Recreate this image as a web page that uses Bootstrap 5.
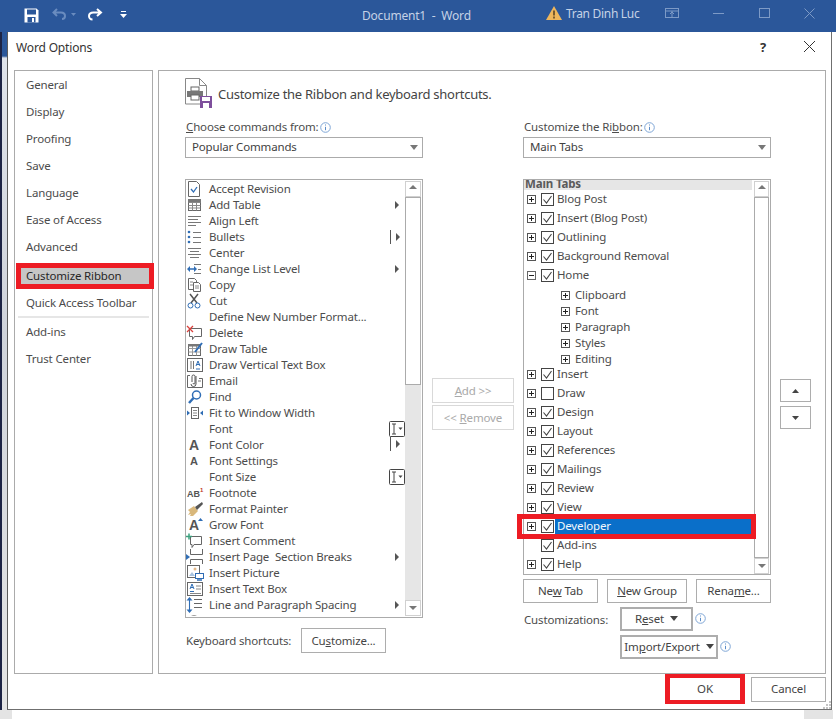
<!DOCTYPE html>
<html lang="en">
<head>
<meta charset="utf-8">
<title>Word Options</title>
<link href="https://cdn.jsdelivr.net/npm/bootstrap@5.3.0/dist/css/bootstrap.min.css" rel="stylesheet">
<style>
html,body{margin:0;height:719px;overflow:hidden;background:#fff}
body{font-family:"Noto Sans","Open Sans",sans-serif;font-size:11.5px;letter-spacing:-.15px;line-height:16px;color:#4c4c4c}
svg{display:block;flex:none}
.app{width:836px;height:719px}
.ttl{height:32px;background:#2b579a;color:#c5d2e6;font-size:12px;position:relative}
.ttl-it{position:absolute;top:7px}
.ttl-tx{position:absolute;top:6px;line-height:18px;white-space:pre}
.ttl-doc{letter-spacing:-.2px;top:7px}
.ttl-usr{letter-spacing:-.3px;top:5px}
.mid{height:678px}
.strip-l{width:7px;background:linear-gradient(#2b579a 0,#2b579a 24px,#dfe3ea 26px,#cfd3da 300px,#e4e4e4 100%);border-left:2px solid #1c2344}
.strip-r{width:4px;background:#fff}
.dlg{width:825px;height:678px;background:#fff;border:1px solid #6f6f6f;border-top:0;border-left:1px solid #5b5b5b;position:relative}
.dlg-h{height:38px;padding:0 0 7px 8px;color:#333;font-size:12px}
.dlg-ctl{position:absolute;top:7px}
.dlg-b{padding-left:6px;height:604px;gap:5px}
.wnav{width:139px;border:1px solid #ababab}
.wnav-i{height:27px;padding-left:11px;line-height:27px;white-space:nowrap}
.wnav-on{height:26px;line-height:16px;margin-top:3px;width:138px;border:5px solid #ed1c24;background:#c6c6c6;padding-left:5px;color:#262626;margin-left:1px}
.wnav-sep{height:2px;background:#e6e6e6;margin:0 3px}
.wmain{width:668px;border:1px solid #ababab;padding-left:26px}
.whead{height:48px;padding-top:8px;gap:5px;font-size:13px;letter-spacing:-.27px;line-height:30px;color:#444}
.whead svg{margin-top:-1px}
.cols{gap:9px}
.col-l{width:238px}
.col-c{width:82px;padding-top:259px}
.col-r{width:248px}
.col-x{width:31px;padding-top:260px}
.lbl{height:18px;white-space:nowrap;padding:0 0 2px 1px;line-height:16px;gap:1px}
.wsel{height:21px;border:1px solid #ababab;padding-left:6px;line-height:17px;margin-bottom:21px;position:relative;color:#3f3f3f}
.wsel::after{content:"";position:absolute;right:4px;top:7px;border:4px solid transparent;border-top:5px solid #777;border-bottom:0}
.wlist{height:439px;border:1px solid #ababab;padding:1px 0}
.wtree{height:396px;border:1px solid #ababab}
.lrows{width:220px;overflow:hidden}
.lrow{height:16px;line-height:16px;white-space:pre;position:relative}
.lico{width:23px;padding-left:0}
.lwid{position:absolute;left:203px;top:0;height:16px;width:16px}
.lwid-ar{left:208px;top:4px;width:6px;height:8px}
.lwid-bar{left:204px;width:12px}
.sb{width:17px;padding-right:1px}
.sb-t{height:394px;margin-top:1px}
.sb-b{height:16px;background:#fff;border:1px solid #d0d0d0;flex:none;position:relative}
.sb-b::after{content:"";position:absolute;left:3px;border:4px solid transparent}
.sb-u::after{top:3px;border-bottom:4px solid #777;border-top:0}
.sb-d::after{top:5px;border-top:4px solid #777;border-bottom:0}
.sb-th{background:#fff;border:1px solid #ababab;flex:none}
.sb-th-l{height:188px}
.sb-th-r{height:361px}
.sb-tr{background:#e6e6e6;flex-grow:1}
.btn.wbtn{--bs-btn-border-radius:0;font-size:11.5px;letter-spacing:-.15px;line-height:16px;padding:0;background:#fff;border:1px solid #adadad;color:#444;white-space:nowrap}
.btn.wbtn:disabled{opacity:1;color:#a9a9a9;border-color:#d9d9d9}
.btn.wfat{border:2px solid #adadad;height:24px}
.wcaret{display:inline-block;vertical-align:2px;margin-left:6px;border:4px solid transparent;border-top:5px solid #444;border-bottom:0}
.btn-addr{width:82px;height:25px;margin-bottom:2px;display:block}
.btn-ud{width:31px;height:23px;margin-bottom:4px}
.kbd-row{height:35px;padding:10px 0 0 1px}
.kbd-l{width:115px}
.btn-cust{width:85px;height:25px}
.tree-top{height:10px;width:228px;background:#e6e6e6;font-weight:700;color:#5a5a5a;line-height:8px;padding-left:1px;overflow:hidden;flex:none}
.trows{width:230px}
.trow{height:19px;padding-left:3px;position:relative;line-height:18px;white-space:nowrap;width:230px}
.tsub{height:16px;padding-left:37px;line-height:16px;white-space:nowrap;gap:5px}
.tsubs{margin:2px 0 -2px}
.tgap{gap:5px}
.ttx{padding:0 0 2px 2px;margin-left:-4px}
.tsel .ttx{background:#0a6fc9;color:#f2f7fc;flex-grow:1;height:19px;line-height:17px;padding-bottom:0}
.tsp{width:9px;flex:none}
.redbox{position:absolute;left:-7px;top:-3px;width:239px;height:25px;border:5px solid #ed1c24}
.act-row{height:28px;padding-top:4px;gap:9px}
.act-row .btn{height:24px}
.btn-w75{width:75px}
.btn-w80{width:80px}
.cz-first{margin-top:4px}
.cz-second{margin-top:4px;padding-left:97px}
.cz-l{width:97px;padding:5px 0 0 1px}
.btn-reset{width:73px}
.btn-imp{width:98px}
.cz-inf{margin:6px 0 0 2px}
.foot-d{height:35px;padding:0 5px 5px 0;gap:6px;position:relative}
.ok-b{width:80px;height:30px;border:4px solid #ed1c24!important;border-left-width:5px!important;border-right-width:5px!important}
.cancel-b{width:75px;height:25px}
.grip{position:absolute;right:0;bottom:0}
.bot{height:9px}
.bot-a{width:12px;background:#e4e4e4}
.bot-c{width:29px;background:#e4e4e4;margin-right:3px}
.gl-a{font-family:"Liberation Sans",sans-serif;font-weight:700;fill:#555;letter-spacing:0}
.ic-save{left:24px;top:8px}.ic-undo{left:52px;top:8px}.ic-redo{left:87px;top:8px}.ic-more{left:120px;top:11px}
.ic-warn{left:546px;top:6px}.ic-rib{left:665px;top:8px}.ic-min{left:713px;top:13px}.ic-max{left:759px;top:8px}.ic-cls{left:804px;top:8px}
.tx-doc{left:362px}.tx-usr{left:566px}
.ctl-q{left:752px;font-weight:700;color:#333;font-size:13px}
.ctl-x{left:795px;top:8px}
</style>
</head>
<body>
<svg width="0" height="0" class="position-absolute">
<defs>
<symbol id="pl" viewBox="0 0 9 9"><rect x=".5" y=".5" width="8" height="8" fill="#fff" stroke="#555"/><path d="M2 4.5h5M4.500 2v5" stroke="#222"/></symbol>
<symbol id="mi" viewBox="0 0 9 9"><rect x=".5" y=".5" width="8" height="8" fill="#fff" stroke="#666"/><path d="M2 4.500h5" stroke="#222"/></symbol>
<symbol id="ck" viewBox="0 0 13 13"><rect x=".5" y=".5" width="12" height="12" fill="#fff" stroke="#444"/><path d="M2.500 6.500l3 3.500 5-7" fill="none" stroke="#444" stroke-width="1.100"/></symbol>
<symbol id="uc" viewBox="0 0 13 13"><rect x=".5" y=".5" width="12" height="12" fill="#fff" stroke="#444"/></symbol>
<symbol id="ra" viewBox="0 0 6 8"><path d="M1 0l4 4-4 4z" fill="#555"/></symbol>
<symbol id="inf" viewBox="0 0 11 11"><circle cx="5.500" cy="5.500" r="4.800" fill="#fff" stroke="#7fa6d6"/><path d="M5.500 2.500v1M5.500 4.800v3.400" stroke="#5b8cc8"/></symbol>
<symbol id="ibeam" viewBox="0 0 16 16"><rect x=".5" y=".5" width="15" height="15" rx="1" fill="#fff" stroke="#444"/><path d="M3 3h4M3 13h4M5 3v10" stroke="#444"/><path d="M9.500 6.500h4l-2 2.500z" fill="#444"/></symbol>
</defs>
</svg>
<div class="app d-flex flex-column">
  <div class="ttl flex-none">
    <svg class="ttl-it ic-save" width="15" height="15" viewBox="0 0 15 15"><path d="M.5.5h12l2 2v12H.5z" fill="#fff"/><rect x="3" y="1.500" width="9" height="5" fill="#2b579a"/><rect x="3.500" y="9" width="8" height="5.500" fill="#2b579a"/><rect x="8" y="10" width="2" height="4" fill="#fff"/></svg>
    <svg class="ttl-it ic-undo" width="24" height="14" viewBox="0 0 24 14"><path d="M5 1L1.500 4.500 5 8M2 4.500h7c3 0 4 2 4 3.500s-1 3-3 3" fill="none" stroke="#6a8cbf" stroke-width="2"/><path d="M19 5h5l-2.500 3z" fill="#6a8cbf"/></svg>
    <svg class="ttl-it ic-redo" width="16" height="14" viewBox="0 0 16 14"><path d="M10 1l4 3.500L10 8M13.500 4.500h-7C3 4.500 2 6.500 2 8s1 3.500 3.500 3.500" fill="none" stroke="#fff" stroke-width="2"/></svg>
    <svg class="ttl-it ic-more" width="7" height="8" viewBox="0 0 7 8"><path d="M1 .5h5" stroke="#fff"/><path d="M0 3h7L3.500 7z" fill="#fff"/></svg>
    <span class="ttl-tx ttl-doc tx-doc">Document1  -  Word</span>
    <svg class="ttl-it ic-warn" width="16" height="14" viewBox="0 0 16 14"><path d="M8 0l8 14H0z" fill="#eeb65c"/><path d="M8 4.500v5M8 10.500v2" stroke="#5c4522" stroke-width="1.600"/></svg>
    <span class="ttl-tx ttl-usr tx-usr">Tran Dinh Luc</span>
    <svg class="ttl-it ic-rib" width="14" height="10" viewBox="0 0 14 10"><rect x=".5" y=".5" width="13" height="9" fill="none" stroke="#7d9ac6"/><path d="M.5 3h13M7 3v6M5 6l2-2 2 2" fill="none" stroke="#7d9ac6"/></svg>
    <svg class="ttl-it ic-min" width="11" height="1" viewBox="0 0 11 1"><path d="M0 .5h11" stroke="#7d9ac6"/></svg>
    <svg class="ttl-it ic-max" width="11" height="10" viewBox="0 0 11 10"><rect x=".5" y=".5" width="10" height="9" fill="none" stroke="#7d9ac6"/></svg>
    <svg class="ttl-it ic-cls" width="11" height="11" viewBox="0 0 11 11"><path d="M.5.500l10 10M10.500.500l-10 10" stroke="#7d9ac6"/></svg>
  </div>
  <div class="mid d-flex">
    <div class="strip-l"></div>
    <div class="dlg d-flex flex-column">
      <div class="dlg-h d-flex align-items-center">Word Options</div>
      <span class="dlg-ctl ctl-q">?</span>
      <svg class="dlg-ctl ctl-x" width="13" height="13" viewBox="0 0 13 13"><path d="M1 1l11 11M12 1L1 12" stroke="#333" stroke-width="1"/></svg>
      <div class="dlg-b d-flex">
        <div class="wnav">
          <div class="wnav-i">General</div>
          <div class="wnav-i">Display</div>
          <div class="wnav-i">Proofing</div>
          <div class="wnav-i">Save</div>
          <div class="wnav-i">Language</div>
          <div class="wnav-i">Ease of Access</div>
          <div class="wnav-i">Advanced</div>
          <div class="wnav-i wnav-on">Customize Ribbon</div>
          <div class="wnav-i">Quick Access Toolbar</div>
          <div class="wnav-sep"></div>
          <div class="wnav-i">Add-ins</div>
          <div class="wnav-i">Trust Center</div>
        </div>
        <div class="wmain">
          <div class="whead d-flex">
            <svg width="28" height="31" viewBox="0 0 28 31"><path d="M.5.500h14l7 7V26H.5z" fill="#fff" stroke="#888"/><path d="M14.500.500v7h7" fill="none" stroke="#888"/><rect x="6" y="9" width="8" height="4" fill="#fff" stroke="#666"/><rect x="2" y="13" width="16" height="6" fill="#777"/><rect x="6" y="17" width="8" height="5" fill="#fff" stroke="#666"/><rect x="15" y="18" width="12" height="12" fill="#7e4f9c"/><rect x="17" y="19" width="8" height="4" fill="#fff"/><rect x="18" y="25" width="6" height="5" fill="#fff"/></svg>
            <span>Customize the Ribbon and keyboard shortcuts.</span>
          </div>
          <div class="cols d-flex">
            <div class="col-l">
              <div class="lbl d-flex align-items-center"><span><u>C</u>hoose commands from:</span><svg width="11" height="11"><use href="#inf"/></svg></div>
              <div class="wsel">Popular Commands</div>
              <div class="wlist d-flex">
                <div class="lrows">
                  <div class="lrow d-flex"><span class="lico"><svg width="18" height="16" viewBox="0 0 18 16"><path d="M2.500.5h8l3 3v12h-11z" fill="#fff" stroke="#666"/><path d="M5 8l2.500 3L11 6" fill="none" stroke="#2f6db5" stroke-width="1.300"/></svg></span>Accept Revision</div>
                  <div class="lrow d-flex"><span class="lico"><svg width="18" height="16" viewBox="0 0 18 16"><rect x="2.500" y="2.500" width="12" height="11" fill="#fff" stroke="#666"/><path d="M2.500 5.500h12M2.500 8.500h12M2.500 11h12M6.500 2.500v11M10.500 2.500v11" stroke="#888"/><rect x="2" y="2" width="13" height="3" fill="#777"/></svg></span>Add Table<svg class="lwid lwid-ar"><use href="#ra"/></svg></div>
                  <div class="lrow d-flex"><span class="lico"><svg width="18" height="16" viewBox="0 0 18 16"><path d="M2 3.500h13M2 6.500h10M2 9.500h13M2 12.500h8" stroke="#777"/></svg></span>Align Left</div>
                  <div class="lrow d-flex"><span class="lico"><svg width="18" height="16" viewBox="0 0 18 16"><circle cx="3" cy="3" r="1.300" fill="#2f6db5"/><circle cx="3" cy="8" r="1.300" fill="#2f6db5"/><circle cx="3" cy="13" r="1.300" fill="#2f6db5"/><path d="M7 3.500h8M7 8.500h8M7 13.500h8" stroke="#777"/></svg></span>Bullets<svg class="lwid lwid-bar" viewBox="0 0 12 16"><path d="M.5 1v14" stroke="#555"/><path d="M6 4l4 4-4 4z" fill="#555"/></svg></div>
                  <div class="lrow d-flex"><span class="lico"><svg width="18" height="16" viewBox="0 0 18 16"><path d="M2 3.500h13M4 6.500h9M2 9.500h13M4 12.500h9" stroke="#777"/></svg></span>Center</div>
                  <div class="lrow d-flex"><span class="lico"><svg width="18" height="16" viewBox="0 0 18 16"><path d="M2 8h8" stroke="#2f6db5" stroke-width="1.500"/><path d="M1 8l3-3v6zM11 8L8 5v6z" fill="#2f6db5"/><path d="M8 3.500h7M12 8.500h3M8 12.500h7" stroke="#777"/></svg></span>Change List Level<svg class="lwid lwid-ar"><use href="#ra"/></svg></div>
                  <div class="lrow d-flex"><span class="lico"><svg width="18" height="16" viewBox="0 0 18 16"><path d="M2.500 1.500h6l2 2v9h-8z" fill="#fff" stroke="#666"/><path d="M7.500 5.500h5l2 2v7h-7z" fill="#fff" stroke="#666"/><path d="M4 5h3M4 8h3M9 9h4M9 11h4" stroke="#888"/></svg></span>Copy</div>
                  <div class="lrow d-flex"><span class="lico"><svg width="18" height="16" viewBox="0 0 18 16"><path d="M4 1l7 9M12 1L5 10" stroke="#555" stroke-width="1.500"/><circle cx="4.500" cy="12.500" r="2.500" fill="none" stroke="#2f6db5"/><circle cx="11.500" cy="12.500" r="2.500" fill="none" stroke="#2f6db5"/></svg></span>Cut</div>
                  <div class="lrow d-flex"><span class="lico"></span>Define New Number Format...</div>
                  <div class="lrow d-flex"><span class="lico"><svg width="18" height="16" viewBox="0 0 18 16"><path d="M3.500 3.500h12v8h-7l-2 3v-3h-3z" fill="#fff" stroke="#666"/><path d="M1 1l6 6M7 1L1 7" stroke="#d9413c" stroke-width="1.300"/></svg></span>Delete</div>
                  <div class="lrow d-flex"><span class="lico"><svg width="18" height="16" viewBox="0 0 18 16"><rect x="2.500" y="3.500" width="12" height="11" fill="#fff" stroke="#666"/><path d="M2.500 7.500h12M2.500 11h12M6.500 3.500v11M10.500 3.500v11" stroke="#999"/><rect x="2" y="3" width="13" height="2.500" fill="#777"/><path d="M9 11l7-9" stroke="#2f6db5" stroke-width="2"/></svg></span>Draw Table</div>
                  <div class="lrow d-flex"><span class="lico"><svg width="18" height="16" viewBox="0 0 18 16"><rect x="1.500" y="1.500" width="15" height="13" fill="#fff" stroke="#666"/><path d="M5 4v8M7.500 4v8" stroke="#777"/><path d="M10 9l2-5 2 5M10.500 7.500h3M10 12h4" fill="none" stroke="#2f6db5"/></svg></span>Draw Vertical Text Box</div>
                  <div class="lrow d-flex"><span class="lico"><svg width="18" height="16" viewBox="0 0 18 16"><path d="M4 2.500H1.500v12h15v-9H13" fill="none" stroke="#666"/><path d="M6 9V3.500a1.500 1.500 0 013 0V10a1 1 0 01-2 0" fill="none" stroke="#555"/><path d="M10 3v8a2.500 2.500 0 01-5 0" fill="none" stroke="#555"/><path d="M12 8h3" stroke="#777"/></svg></span>Email</div>
                  <div class="lrow d-flex"><span class="lico"><svg width="18" height="16" viewBox="0 0 18 16"><circle cx="10.500" cy="6" r="4" fill="#fff" stroke="#2f6db5" stroke-width="1.500"/><path d="M7.500 9L3 14" stroke="#2f6db5" stroke-width="2.500"/></svg></span>Find</div>
                  <div class="lrow d-flex"><span class="lico"><svg width="18" height="16" viewBox="0 0 18 16"><rect x="5.500" y="2.500" width="7" height="11" fill="#fff" stroke="#666"/><path d="M7 5.500h4M7 8h4M7 10.500h4" stroke="#888"/><path d="M4 8L1 5.500v5zM14 8l3-2.500v5z" fill="#2f6db5"/></svg></span>Fit to Window Width</div>
                  <div class="lrow d-flex"><span class="lico"></span>Font<svg class="lwid"><use href="#ibeam"/></svg></div>
                  <div class="lrow d-flex"><span class="lico"><svg width="18" height="16" viewBox="0 0 18 16"><text x="8" y="13" text-anchor="middle" class="gl-a" font-size="14">A</text></svg></span>Font Color<svg class="lwid lwid-bar" viewBox="0 0 12 16"><path d="M.5 0v14" stroke="#555"/><path d="M6 3l4 4-4 4z" fill="#555"/></svg></div>
                  <div class="lrow d-flex"><span class="lico"><svg width="18" height="16" viewBox="0 0 18 16"><text x="8" y="12" text-anchor="middle" class="gl-a" font-size="11">A</text></svg></span>Font Settings</div>
                  <div class="lrow d-flex"><span class="lico"></span>Font Size<svg class="lwid"><use href="#ibeam"/></svg></div>
                  <div class="lrow d-flex"><span class="lico"><svg width="18" height="16" viewBox="0 0 18 16"><text x="1" y="12" class="gl-a" font-size="9">AB</text><text x="14" y="7" font-family="Liberation Sans" font-size="6" font-weight="700" fill="#c0392b">1</text></svg></span>Footnote</div>
                  <div class="lrow d-flex"><span class="lico"><svg width="18" height="16" viewBox="0 0 18 16"><path d="M2 9l6-4 4 5-5 5H4l1-2-3 1 2-3z" fill="#d9b87c"/><path d="M9 6l7-5 1 2-6 6z" fill="#555"/></svg></span>Format Painter</div>
                  <div class="lrow d-flex"><span class="lico"><svg width="18" height="16" viewBox="0 0 18 16"><text x="8" y="13" text-anchor="middle" class="gl-a" font-size="14">A</text><path d="M12 4l2.500-3L17 4z" fill="#2f6db5"/></svg></span>Grow Font</div>
                  <div class="lrow d-flex"><span class="lico"><svg width="18" height="16" viewBox="0 0 18 16"><path d="M4.500 3.500h11v8H8l-2 3v-3H4.500z" fill="#fff" stroke="#666"/><path d="M0 3.500h6M3 .5v6" stroke="#3aa17e" stroke-width="1.500"/></svg></span>Insert Comment</div>
                  <div class="lrow d-flex"><span class="lico"><svg width="18" height="16" viewBox="0 0 18 16"><path d="M4.500 0v5.500h12V0M4.500 15v-4.500h12V15" fill="none" stroke="#666"/><path d="M4 8L0 5v6z" fill="#2f6db5"/></svg></span>Insert Page  Section Breaks<svg class="lwid lwid-ar"><use href="#ra"/></svg></div>
                  <div class="lrow d-flex"><span class="lico"><svg width="18" height="16" viewBox="0 0 18 16"><rect x="1.500" y=".5" width="12" height="12" fill="#fff" stroke="#666"/><path d="M3 11l3-4 3 4z" fill="#a8c3e0"/><circle cx="9" cy="4" r="1.500" fill="#e3b98a"/><rect x="9.500" y="8.500" width="8" height="5" fill="#fff" stroke="#2f6db5"/><path d="M11 15h5" stroke="#2f6db5" stroke-width="1.500"/></svg></span>Insert Picture</div>
                  <div class="lrow d-flex"><span class="lico"><svg width="18" height="16" viewBox="0 0 18 16"><rect x="1.500" y="1.500" width="15" height="13" fill="#fff" stroke="#666"/><path d="M4 8l2-5 2 5M5 6.500h2M4 10.500h4" fill="none" stroke="#2f6db5"/><path d="M10 5h5M10 8h5M4 12.500h11" stroke="#888"/></svg></span>Insert Text Box</div>
                  <div class="lrow d-flex"><span class="lico"><svg width="18" height="16" viewBox="0 0 18 16"><path d="M3.500 2v12" stroke="#2f6db5" stroke-width="1.100"/><path d="M3.500 0l3 3.500h-6zM3.500 16l3-3.500h-6z" fill="#2f6db5"/><path d="M8 2.500h8M8 6.500h8M8 10.500h8" stroke="#666"/></svg></span>Line and Paragraph Spacing<svg class="lwid lwid-ar"><use href="#ra"/></svg></div>
                  <div class="lrow d-flex"><span class="lico"><svg width="18" height="16" viewBox="0 0 18 16"><path d="M2 8c1-7 11-7 12 0z" fill="#fff" stroke="#777"/></svg></span>Help</div>
                </div>
                <div class="sb d-flex flex-column">
                  <div class="sb-b sb-u"></div>
                  <div class="sb-th sb-th-l"></div>
                  <div class="sb-tr"></div>
                  <div class="sb-b sb-d"></div>
                </div>
              </div>
              <div class="kbd-row d-flex align-items-center">
                <span class="kbd-l">Keyboard shortcuts:</span>
                <button type="button" class="btn wbtn btn-cust">Cu<u>s</u>tomize...</button>
              </div>
            </div>
            <div class="col-c">
              <button type="button" class="btn wbtn btn-addr" disabled><u>A</u>dd &gt;&gt;</button>
              <button type="button" class="btn wbtn btn-addr" disabled>&lt;&lt; <u>R</u>emove</button>
            </div>
            <div class="col-r">
              <div class="lbl d-flex align-items-center"><span>Customize the Ri<u>b</u>bon:</span><svg width="11" height="11"><use href="#inf"/></svg></div>
              <div class="wsel">Main Tabs</div>
              <div class="wtree d-flex">
                <div class="trows">
                  <div class="tree-top">Main Tabs</div>
                  <div class="trow d-flex align-items-center tgap"><svg width="9" height="9"><use href="#pl"/></svg><svg width="13" height="13"><use href="#ck"/></svg><span class="ttx">Blog Post</span></div>
                  <div class="trow d-flex align-items-center tgap"><svg width="9" height="9"><use href="#pl"/></svg><svg width="13" height="13"><use href="#ck"/></svg><span class="ttx">Insert (Blog Post)</span></div>
                  <div class="trow d-flex align-items-center tgap"><svg width="9" height="9"><use href="#pl"/></svg><svg width="13" height="13"><use href="#ck"/></svg><span class="ttx">Outlining</span></div>
                  <div class="trow d-flex align-items-center tgap"><svg width="9" height="9"><use href="#pl"/></svg><svg width="13" height="13"><use href="#ck"/></svg><span class="ttx">Background Removal</span></div>
                  <div class="trow d-flex align-items-center tgap"><svg width="9" height="9"><use href="#mi"/></svg><svg width="13" height="13"><use href="#ck"/></svg><span class="ttx">Home</span></div>
                  <div class="tsubs">
                    <div class="tsub d-flex align-items-center"><svg width="9" height="9"><use href="#pl"/></svg><span>Clipboard</span></div>
                    <div class="tsub d-flex align-items-center"><svg width="9" height="9"><use href="#pl"/></svg><span>Font</span></div>
                    <div class="tsub d-flex align-items-center"><svg width="9" height="9"><use href="#pl"/></svg><span>Paragraph</span></div>
                    <div class="tsub d-flex align-items-center"><svg width="9" height="9"><use href="#pl"/></svg><span>Styles</span></div>
                    <div class="tsub d-flex align-items-center"><svg width="9" height="9"><use href="#pl"/></svg><span>Editing</span></div>
                  </div>
                  <div class="trow d-flex align-items-center tgap"><svg width="9" height="9"><use href="#pl"/></svg><svg width="13" height="13"><use href="#ck"/></svg><span class="ttx">Insert</span></div>
                  <div class="trow d-flex align-items-center tgap"><svg width="9" height="9"><use href="#pl"/></svg><svg width="13" height="13"><use href="#uc"/></svg><span class="ttx">Draw</span></div>
                  <div class="trow d-flex align-items-center tgap"><svg width="9" height="9"><use href="#pl"/></svg><svg width="13" height="13"><use href="#ck"/></svg><span class="ttx">Design</span></div>
                  <div class="trow d-flex align-items-center tgap"><svg width="9" height="9"><use href="#pl"/></svg><svg width="13" height="13"><use href="#ck"/></svg><span class="ttx">Layout</span></div>
                  <div class="trow d-flex align-items-center tgap"><svg width="9" height="9"><use href="#pl"/></svg><svg width="13" height="13"><use href="#ck"/></svg><span class="ttx">References</span></div>
                  <div class="trow d-flex align-items-center tgap"><svg width="9" height="9"><use href="#pl"/></svg><svg width="13" height="13"><use href="#ck"/></svg><span class="ttx">Mailings</span></div>
                  <div class="trow d-flex align-items-center tgap"><svg width="9" height="9"><use href="#pl"/></svg><svg width="13" height="13"><use href="#ck"/></svg><span class="ttx">Review</span></div>
                  <div class="trow d-flex align-items-center tgap"><svg width="9" height="9"><use href="#pl"/></svg><svg width="13" height="13"><use href="#ck"/></svg><span class="ttx">View</span></div>
                  <div class="trow tsel d-flex align-items-center tgap"><svg width="9" height="9"><use href="#pl"/></svg><svg width="13" height="13"><use href="#ck"/></svg><span class="ttx">Developer</span><div class="redbox"></div></div>
                  <div class="trow d-flex align-items-center tgap"><span class="tsp"></span><svg width="13" height="13"><use href="#ck"/></svg><span class="ttx">Add-ins</span></div>
                  <div class="trow d-flex align-items-center tgap"><svg width="9" height="9"><use href="#pl"/></svg><svg width="13" height="13"><use href="#ck"/></svg><span class="ttx">Help</span></div>
                </div>
                <div class="sb sb-t d-flex flex-column">
                  <div class="sb-b sb-u"></div>
                  <div class="sb-th sb-th-r"></div>
                  <div class="sb-b sb-d"></div>
                </div>
              </div>
              <div class="act-row d-flex">
                <button type="button" class="btn wbtn btn-w75">Ne<u>w</u> Tab</button>
                <button type="button" class="btn wbtn btn-w80"><u>N</u>ew Group</button>
                <button type="button" class="btn wbtn btn-w75">Rena<u>m</u>e...</button>
              </div>
              <div class="d-flex cz-first">
                <span class="cz-l">Customizations:</span>
                <button type="button" class="btn wbtn wfat btn-reset">R<u>e</u>set<span class="wcaret"></span></button>
                <svg class="cz-inf" width="11" height="11"><use href="#inf"/></svg>
              </div>
              <div class="d-flex cz-second">
                <button type="button" class="btn wbtn wfat btn-imp">Im<u>p</u>ort/Export<span class="wcaret"></span></button>
                <svg class="cz-inf" width="11" height="11"><use href="#inf"/></svg>
              </div>
            </div>
            <div class="col-x">
              <button type="button" class="btn wbtn btn-ud d-flex align-items-center justify-content-center" aria-label="Up"><svg width="7" height="4" viewBox="0 0 7 4"><path d="M3.500 0L7 4H0z" fill="#444"/></svg></button>
              <button type="button" class="btn wbtn btn-ud d-flex align-items-center justify-content-center" aria-label="Down"><svg width="7" height="4" viewBox="0 0 7 4"><path d="M3.500 4L7 0H0z" fill="#444"/></svg></button>
            </div>
          </div>
        </div>
      </div>
      <div class="foot-d d-flex align-items-center justify-content-end">
        <button type="button" class="btn wbtn ok-b">OK</button>
        <button type="button" class="btn wbtn cancel-b">Cancel</button>
        <svg class="grip" width="9" height="9" viewBox="0 0 9 9"><path d="M7 1h2v2H7zM4 4h2v2H4zM7 4h2v2H7zM1 7h2v2H1zM4 7h2v2H4zM7 7h2v2H7z" fill="#c4c4c4"/></svg>
      </div>
    </div>
    <div class="strip-r"></div>
  </div>
  <div class="bot d-flex justify-content-between">
    <div class="bot-a"></div>
    <div class="bot-c"></div>
  </div>
</div>
<script src="https://cdn.jsdelivr.net/npm/bootstrap@5.3.0/dist/js/bootstrap.bundle.min.js"></script>
</body>
</html>
